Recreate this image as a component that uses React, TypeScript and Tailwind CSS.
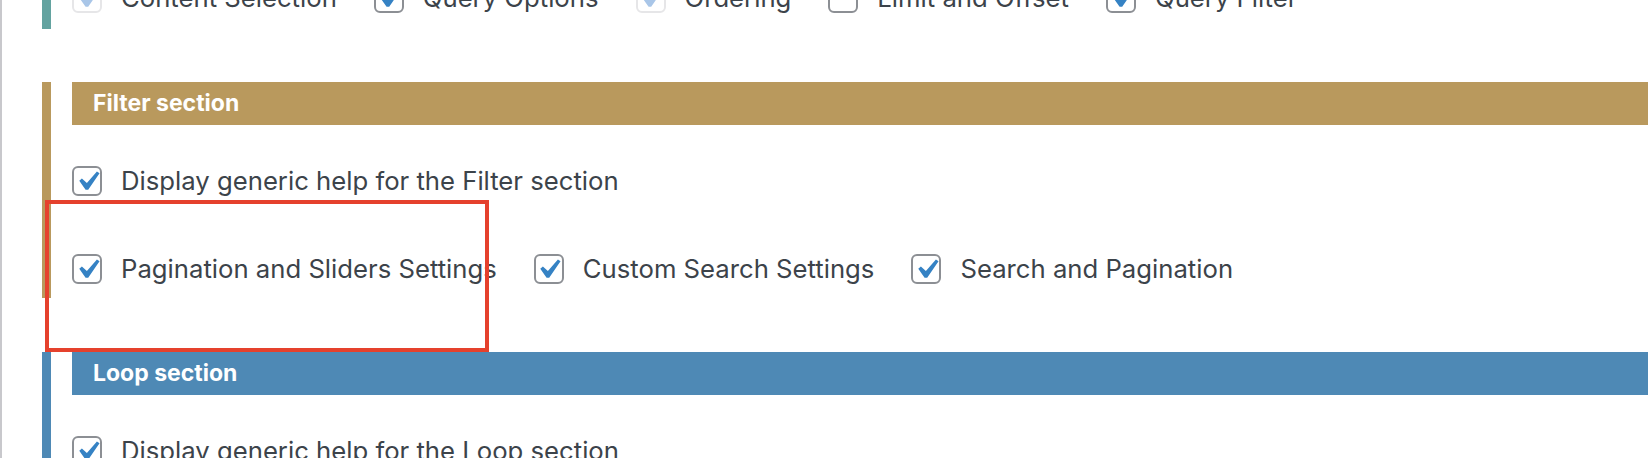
import React from 'react';

type Item = { label: string; checked: boolean; disabled?: boolean };

function Checkbox({ checked, disabled }: { checked: boolean; disabled?: boolean }) {
  return (
    <span
      className={`relative flex h-[30px] w-[30px] shrink-0 items-center justify-center rounded-[6px] border-2 bg-white ${
        disabled ? 'border-[#e6e6e8]' : 'border-[#8c8f94]'
      }`}
    >
      {checked && (
        <svg viewBox="0 0 20 20" className="absolute h-[39px] w-[39px]">
          <path
            d="M14.83 4.89l1.34.94-5.81 8.38H9.02L5.78 9.67l1.34-1.25 2.57 2.4z"
            fill={disabled ? '#a9c6e8' : '#3582c4'}
          />
        </svg>
      )}
    </span>
  );
}

function Row({ items }: { items: Item[] }) {
  return (
    <div className="flex items-center gap-x-[37px]">
      {items.map((item) => (
        <label key={item.label} className="flex items-center gap-[19px]">
          <Checkbox checked={item.checked} disabled={item.disabled} />
          <span className="text-[25.7px] leading-[30px] text-[#3c434a]">{item.label}</span>
        </label>
      ))}
    </div>
  );
}

function Section({
  title,
  border,
  bg,
  children,
  className = '',
}: {
  title: string;
  border: string;
  bg: string;
  children: React.ReactNode;
  className?: string;
}) {
  return (
    <section className={`border-l-[9px] pl-[21px] pb-[14px] ${border} ${className}`}>
      <div className={`flex h-[43px] items-center pl-[21px] ${bg}`}>
        <h2 className="text-[23px] font-bold text-white">{title}</h2>
      </div>
      <div className="flex flex-col gap-[58px] pt-[41px]">{children}</div>
    </section>
  );
}

export default function App() {
  const queryItems: Item[] = [
    { label: 'Content Selection', checked: true, disabled: true },
    { label: 'Query Options', checked: true },
    { label: 'Ordering', checked: true, disabled: true },
    { label: 'Limit and Offset', checked: false },
    { label: 'Query Filter', checked: true },
  ];

  const filterItems: Item[] = [
    { label: 'Pagination and Sliders Settings', checked: true },
    { label: 'Custom Search Settings', checked: true },
    { label: 'Search and Pagination', checked: true },
  ];

  return (
    <div
      className="relative flex h-[458px] overflow-hidden bg-white"
      style={{ fontFamily: 'Inter, "Noto Sans", sans-serif' }}
    >
      <div className="w-[2px] shrink-0 bg-[#c8c8cc]" />

      <div className="flex-1 pl-[40px]">
        {/* query section, only its last row is in view */}
        <section className="-mt-[17px] border-l-[9px] border-[#63a3a0] pl-[21px] pb-[16px]">
          <Row items={queryItems} />
        </section>

        <Section title="Filter section" border="border-[#b9995d]" bg="bg-[#b9995d]" className="mt-[53px]">
          <Row items={[{ label: 'Display generic help for the Filter section', checked: true }]} />
          <Row items={filterItems} />
        </Section>

        <Section title="Loop section" border="border-[#4e89b5]" bg="bg-[#4e89b5]" className="mt-[54px]">
          <Row items={[{ label: 'Display generic help for the Loop section', checked: true }]} />
        </Section>
      </div>

      {/* highlight annotation */}
      <div className="pointer-events-none absolute left-[45px] top-[200px] h-[152px] w-[444px] border-4 border-[#e5412d]" />
    </div>
  );
}
